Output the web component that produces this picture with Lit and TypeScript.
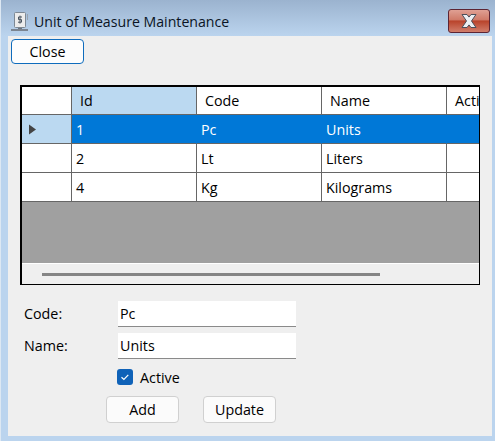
import { LitElement, css, html } from "lit";
import { customElement } from "lit/decorators.js";

const columns = ["Id", "Code", "Name", "Acti"];
const rows = [
  ["1", "Pc", "Units", ""],
  ["2", "Lt", "Liters", ""],
  ["4", "Kg", "Kilograms", ""],
];

@customElement("app-root")
export class AppRoot extends LitElement {
  static styles = css`
    :host {
      display: block;
      width: 495px;
      height: 441px;
      overflow: hidden;
      font-family: "Open Sans", "Noto Sans", sans-serif;
      font-size: 14.3px;
      color: #000;
    }

    /*window frame*/
    .window {
      box-sizing: border-box;
      height: 441px;
      display: flex;
      flex-direction: column;
      padding: 0 3px 5px 7px;
      border-left: 1px solid #dde8f3;
      background: linear-gradient(#9bb3cf 0, #bbd4ee 36px, #bbd4ee 100%);
    }

    .titlebar {
      box-sizing: border-box;
      height: 36px;
      padding-top: 6px;
      flex: none;
      display: flex;
      align-items: center;
      gap: 5px;
      margin-right: -3px;
      margin-left: 2px;
      font-size: 14.15px;
    }

    .title {
      flex: 1;
      color: #0a1424;
    }

    .app-icon {
      display: block;
      flex: none;
    }

    .close-x {
      display: block;
      flex: none;
      margin-right: 5px;
    }

    /*client area*/
    .client {
      flex: 1;
      background: #efefef;
      padding: 3px 0 0 3px;
    }

    .btn {
      box-sizing: border-box;
      width: 73px;
      height: 27px;
      display: flex;
      align-items: center;
      justify-content: center;
      background: #fbfbfb;
      border: 1px solid #d0d0d0;
      border-radius: 4px;
    }

    .btn_default {
      height: 25px;
      background: #fdfdfd;
      border-color: #0f6cbd;
    }

    /*data grid*/
    .grid {
      box-sizing: border-box;
      width: 460px;
      height: 200px;
      margin: 21px 0 0 9px;
      display: flex;
      flex-direction: column;
      border: solid #000;
      border-width: 2px 1px 1.5px 2px;
      overflow: hidden;
    }

    .table {
      display: grid;
      grid-template-columns: 50px 125px 125px 125px 34px;
      grid-template-rows: 28px;
      grid-auto-rows: 29px;
      flex: none;
      background: #fff;
    }

    .cell {
      box-sizing: border-box;
      padding-left: 4px;
      display: flex;
      align-items: center;
      white-space: nowrap;
      overflow: hidden;
      border-right: 1.5px solid #666;
      border-bottom: 1.5px solid #666;
    }

    .cell:nth-child(5n) {
      border-right: 0;
    }

    .head {
      padding-left: 8px;
    }

    .head_active {
      background: #bbd9f1;
    }

    .rowhead {
      padding-left: 6px;
    }

    .rowhead_active {
      background: #bbd9f1;
    }

    .selected {
      background: #0078d7;
      color: #fff;
      border-right-color: #0078d7;
    }

    .empty {
      flex: 1;
      background: #a0a0a0;
      border-bottom: 1px solid #fff;
    }

    .scrollbar {
      flex: none;
      height: 20px;
      display: flex;
      align-items: center;
      padding-left: 20px;
      background: #efefef;
    }

    .thumb {
      width: 338px;
      height: 3px;
      background: #858585;
    }

    /*edit form*/
    .form {
      margin: 16px 0 0 13px;
      display: flex;
      flex-direction: column;
    }

    .field {
      display: flex;
      align-items: center;
      height: 26px;
      margin-bottom: 6px;
    }

    .field label {
      width: 94px;
      flex: none;
      position: relative;
      top: -1px;
    }

    .input {
      box-sizing: border-box;
      width: 178px;
      height: 26px;
      padding-left: 2px;
      display: flex;
      align-items: center;
      background: #fff;
      border-bottom: 1px solid #8a8a8a;
    }

    .check {
      display: flex;
      align-items: center;
      gap: 7px;
      height: 20px;
      margin: 2px 0 0 93px;
    }

    .box {
      width: 16px;
      height: 16px;
      display: block;
    }

    .actions {
      display: flex;
      gap: 24px;
      margin: 9px 0 0 82px;
    }
  `;

  render() {
    return html`
      <div class="window">
        <div class="titlebar">
          <svg class="app-icon" width="19" height="19" viewBox="0 0 19 19">
            <rect x="4.5" y="0.5" width="11" height="15" rx="1" fill="#ececec" stroke="#7d8894" />
            <rect x="17" y="2" width="1" height="6" fill="#98a2ad" />
            <rect x="8" y="16" width="4" height="1" fill="#6d7680" />
            <rect x="1" y="17" width="17" height="2" fill="#7b8490" />
            <path d="M12 5H8.5v2.6h3v2.6H8M10 3.6v8" fill="none" stroke="#4a5560" stroke-width="1" />
          </svg>
          <span class="title">Unit of Measure Maintenance</span>
          <svg class="close-x" width="42" height="24" viewBox="0 0 42 24">
            <defs>
              <linearGradient id="red" x1="0" y1="0" x2="0" y2="1">
                <stop offset="0" stop-color="#e0a296" />
                <stop offset="0.45" stop-color="#cf7a68" />
                <stop offset="0.5" stop-color="#b9432b" />
                <stop offset="1" stop-color="#d2806e" />
              </linearGradient>
            </defs>
            <rect x="0.5" y="0.5" width="41" height="23" rx="2.5" fill="url(#red)" stroke="#5c2433" />
            <path d="M14 5.5h5l2 2.6 2-2.6h5l-4.5 6.5 4.5 6.5h-5l-2-2.6-2 2.6h-5l4.5-6.5z" fill="#eceff2" stroke="#4c4f5a" stroke-width="1" />
          </svg>
        </div>
        <div class="client">
          <div class="btn btn_default">Close</div>
          <div class="grid">
            <div class="table">
              <div class="cell head"></div>
              ${columns.map(
                (name, i) =>
                  html`<div class="cell head ${i === 0 ? "head_active" : ""}">${name}</div>`,
              )}
              ${rows.map(
                (row, r) => html`
                  <div class="cell rowhead ${r === 0 ? "rowhead_active" : ""}">
                    ${r === 0
                      ? html`<svg width="9" height="11" viewBox="0 0 9 11">
                          <path d="M1 0.5l7 5-7 5z" fill="#444" />
                        </svg>`
                      : ""}
                  </div>
                  ${row.map(
                    (value) =>
                      html`<div class="cell ${r === 0 ? "selected" : ""}">
                        ${value}
                      </div>`,
                  )}
                `,
              )}
            </div>
            <div class="empty"></div>
            <div class="scrollbar"><div class="thumb"></div></div>
          </div>
          <div class="form">
            <div class="field">
              <label>Code:</label>
              <div class="input">Pc</div>
            </div>
            <div class="field">
              <label>Name:</label>
              <div class="input">Units</div>
            </div>
            <div class="check">
              <svg class="box" viewBox="0 0 16 16">
                <rect width="16" height="16" rx="3" fill="#0f62b8" />
                <path d="M4.5 8.2l2.4 2.3 4.4-4.6" fill="none" stroke="#fff" stroke-width="1.2" />
              </svg>
              <span>Active</span>
            </div>
            <div class="actions">
              <div class="btn">Add</div>
              <div class="btn">Update</div>
            </div>
          </div>
        </div>
      </div>
    `;
  }
}
